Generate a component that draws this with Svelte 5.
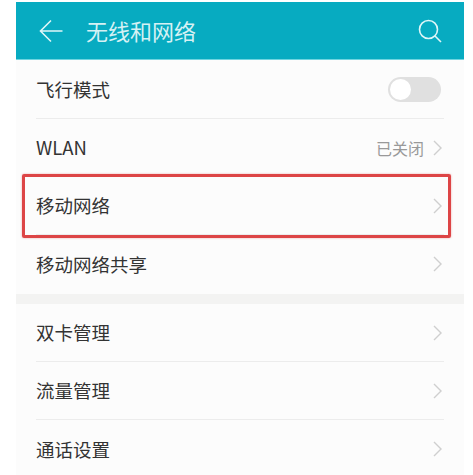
<script>
  const groups = [
    [
      { label: '飞行模式', kind: 'toggle' },
      { label: 'WLAN', value: '已关闭' },
      { label: '移动网络', marked: true },
      { label: '移动网络共享' }
    ],
    [{ label: '双卡管理' }, { label: '流量管理' }, { label: '通话设置' }]
  ];
</script>

<div class="screen">
  <header class="bar">
    <svg class="back" viewBox="0 0 24 24" width="24" height="24" aria-hidden="true">
      <path d="M23.500 12H1.500M12 1.500 1.500 12 12 22.500" />
    </svg>
    <h1>无线和网络</h1>
    <svg class="search" viewBox="0 0 24 24" width="24" height="24" aria-hidden="true">
      <circle cx="10.500" cy="10.500" r="9" />
      <path d="M17 17l6 6" />
    </svg>
  </header>

  {#each groups as group, g}
    <section class="group" class:last={g === groups.length - 1}>
      {#each group as row}
        <div class="row" class:marked={row.marked}>
          <span class="label">{row.label}</span>
          {#if row.kind === 'toggle'}
            <span class="toggle"><span class="knob"></span></span>
          {:else}
            <span class="end">
              {#if row.value}<span class="value">{row.value}</span>{/if}
              <svg class="chev" viewBox="0 0 9 16" width="9" height="16" aria-hidden="true">
                <path d="M1 1l7 7-7 7" />
              </svg>
            </span>
          {/if}
        </div>
      {/each}
    </section>
  {/each}
</div>

<style>
  :global(body) {
    margin: 0;
    background: #fff;
  }

  .screen {
    width: 448px;
    height: 473px;
    margin: 2px 0 0 16px;
    overflow: hidden;
    background: #f3f3f2;
    font-family: "Noto Sans CJK SC", "Liberation Sans", sans-serif;
    color: #333;
  }

  .bar {
    display: flex;
    align-items: center;
    height: 58px;
    padding: 0 22px 0 23px;
    background: #07abc1;
    border-bottom: 1px solid #6fd5e0;
    box-sizing: border-box;
    color: #d5f1f4;
  }

  .back path,
  .search circle,
  .search path {
    fill: none;
    stroke: #dff6f8;
    stroke-width: 1.600;
  }

  h1 {
    flex: 1;
    margin: -2px 0 0 23px;
    font-size: 22px;
    font-weight: 400;
    line-height: 1;
  }

  .group {
    background: #fcfcfc;
    padding: 0 20px;
    margin-top: 10px;
  }

  .bar + .group {
    margin-top: 0;
    padding-top: 1px;
    padding-bottom: 1px;
  }

  .group.last {
    padding-bottom: 20px;
  }

  .row {
    position: relative;
    display: flex;
    align-items: center;
    justify-content: space-between;
    height: 58px;
    box-sizing: border-box;
    border-bottom: 1px solid #ececec;
    padding-right: 2px;
  }

  .row:last-child {
    border-bottom: 0;
  }

  .label {
    font-size: 18.500px;
    line-height: 1;
  }

  .end {
    display: flex;
    align-items: center;
    gap: 9px;
  }

  .value {
    font-size: 16px;
    color: #999;
    line-height: 1;
  }

  .chev path {
    fill: none;
    stroke: #cfcfcf;
    stroke-width: 1.400;
  }

  .toggle {
    display: flex;
    align-items: center;
    width: 53px;
    height: 25px;
    border-radius: 13px;
    background: #e0e0e0;
    margin-right: 1px;
  }

  .knob {
    width: 21px;
    height: 21px;
    margin-left: 2px;
    border-radius: 50%;
    background: #fff;
  }

  .marked::after {
    content: "";
    position: absolute;
    left: -14px;
    right: -7px;
    top: -3px;
    bottom: -4px;
    border: 3px solid #dd4546;
    border-radius: 2px;
    box-shadow: 0 0 2px rgba(221, 69, 70, 0.5);
    pointer-events: none;
  }
</style>
